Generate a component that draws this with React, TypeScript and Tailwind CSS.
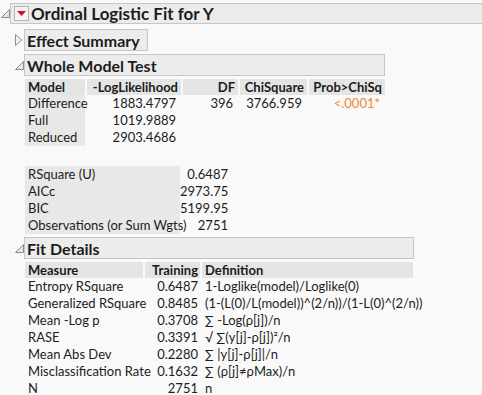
import React from 'react';

const CornerTri = () => (
  <svg width="9" height="9" viewBox="0 0 9 9">
    <polygon points="0.5,8.5 8.5,0.5 8.5,8.5" fill="#e6e6e6" stroke="#8a8a8a" strokeWidth="1" />
  </svg>
);

const RightTri = () => (
  <svg width="7" height="12" viewBox="0 0 7 12">
    <polygon points="0.5,0.5 6.5,6 0.5,11.5" fill="#f2f2f2" stroke="#8a8a8a" strokeWidth="1" />
  </svg>
);

const RedMenu = () => (
  <div className="w-[15px] h-[15px] border border-[#b4b4b4] bg-[#f4f4f4] flex items-center justify-center">
    <svg width="9" height="5" viewBox="0 0 9 5">
      <polygon points="0,0 9,0 4.5,5" fill="#d0101e" />
    </svg>
  </div>
);

const SectionHead = ({ title, open, width }: { title: string; open: boolean; width: string }) => (
  <div className="flex">
    <div className="w-[24px] flex items-center pl-[15px]">
      {open ? <CornerTri /> : <RightTri />}
    </div>
    <div className={`${width} h-[22px] border border-[#c6c6c6] bg-[#ececec] flex items-center pl-[2px] font-bold text-[16px] whitespace-nowrap`}>
      {title}
    </div>
  </div>
);

const wholeModel = [
  ['Difference', '1883.4797', '396', '3766.959', '<.0001*'],
  ['Full', '1019.9889', '', '', ''],
  ['Reduced', '2903.4686', '', '', ''],
];

const summary = [
  ['RSquare (U)', '0.6487'],
  ['AICc', '2973.75'],
  ['BIC', '5199.95'],
  ['Observations (or Sum Wgts)', '2751'],
];

const fitDetails = [
  ['Entropy RSquare', '0.6487', '1-Loglike(model)/Loglike(0)'],
  ['Generalized RSquare', '0.8485', '(1-(L(0)/L(model))^(2/n))/(1-L(0)^(2/n))'],
  ['Mean -Log p', '0.3708', '∑ -Log(ρ[j])/n'],
  ['RASE', '0.3391', '√ ∑(y[j]-ρ[j])²/n'],
  ['Mean Abs Dev', '0.2280', '∑ |y[j]-ρ[j]|/n'],
  ['Misclassification Rate', '0.1632', '∑ (ρ[j]≠ρMax)/n'],
  ['N', '2751', 'n'],
];

export default function App() {
  return (
    <div className="w-[482px] h-[395px] overflow-hidden bg-[#f9f9f9] text-[13px] leading-[17px] text-[#1c1c1c] font-['Lato','Noto_Sans',sans-serif] whitespace-nowrap">
      {/* report title */}
      <div className="pt-[3px] flex">
        <div className="w-[10px] flex items-center pl-[1px]">
          <CornerTri />
        </div>
        <div className="flex-1 h-[21px] border border-r-0 border-[#c6c6c6] bg-[#ececec] flex items-center pl-[3px] gap-[2px]">
          <RedMenu />
          <span className="font-bold text-[17px]">Ordinal Logistic Fit for Y</span>
        </div>
      </div>

      <div className="mt-[5px]">
        <SectionHead title="Effect Summary" open={false} width="w-[124px]" />
      </div>

      <div className="mt-[3px]">
        <SectionHead title="Whole Model Test" open={true} width="w-[361px]" />
      </div>

      <div className="ml-[25px] mt-[3px] grid grid-cols-[60px_94px_55px_67px_76px] gap-x-[2px]">
        {['Model', '-LogLikelihood', 'DF', 'ChiSquare', 'Prob>ChiSq'].map((h, i) => (
          <div key={h} className={`h-[16px] leading-[16px] bg-[#e4e4e4] font-bold px-[3px] ${i === 0 ? 'text-left' : 'text-right'}`}>
            {h}
          </div>
        ))}
        {wholeModel.map((row) =>
          row.map((c, i) => (
            <div
              key={row[0] + i}
              className={`h-[17px] px-[3px] ${i === 0 ? 'text-left bg-[#e8e8e8]' : 'text-right pr-[5px]'} ${i === 4 ? 'text-[#ee8a30]' : ''}`}
            >
              {c}
            </div>
          ))
        )}
      </div>

      <div className="ml-[25px] mt-[20px] grid grid-cols-[155px_52px]">
        {summary.map(([k, v]) => (
          <React.Fragment key={k}>
            <div className="h-[17px] px-[3px] bg-[#e8e8e8]">{k}</div>
            <div className="h-[17px] text-right pr-[4px]">{v}</div>
          </React.Fragment>
        ))}
      </div>

      <div className="mt-[3px]">
        <SectionHead title="Fit Details" open={true} width="w-[390px]" />
      </div>

      <div className="ml-[25px] mt-[3px] grid grid-cols-[118px_55px_211px] gap-x-[2px]">
        <div className="h-[16px] leading-[16px] bg-[#e4e4e4] font-bold px-[3px]">Measure</div>
        <div className="h-[16px] leading-[16px] bg-[#e4e4e4] font-bold px-[2px] text-right">Training</div>
        <div className="h-[16px] leading-[16px] bg-[#e4e4e4] font-bold px-[3px]">Definition</div>
        {fitDetails.map(([m, t, d]) => (
          <React.Fragment key={m}>
            <div className="h-[17px] px-[3px]">{m}</div>
            <div className="h-[17px] px-[2px] text-right">{t}</div>
            <div className="h-[17px] px-[3px]">{d}</div>
          </React.Fragment>
        ))}
      </div>
    </div>
  );
}
